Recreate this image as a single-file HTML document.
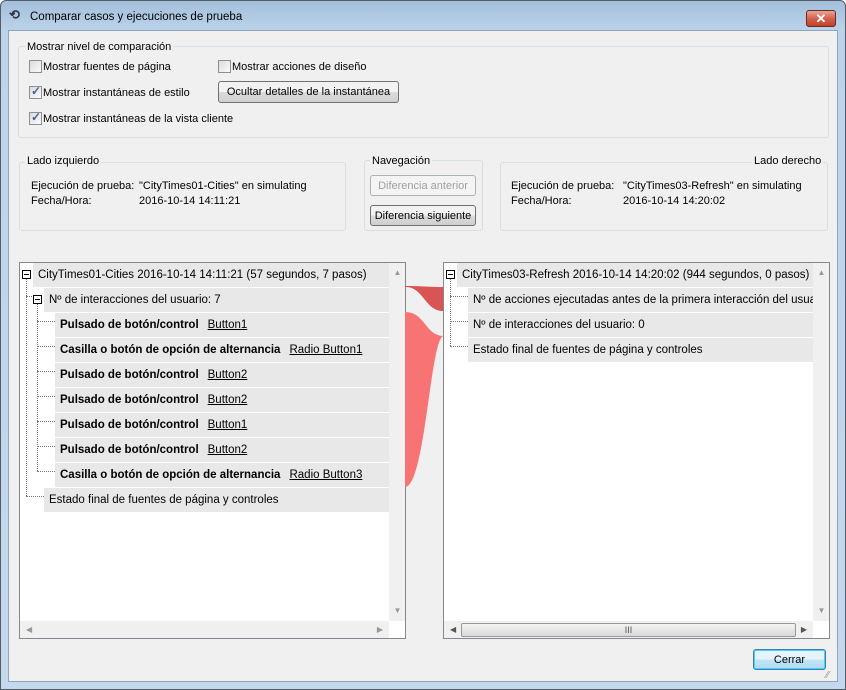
<!DOCTYPE html>
<html><head><meta charset="utf-8"><style>
*{margin:0;padding:0;box-sizing:border-box}
body{width:846px;height:690px;overflow:hidden;background:#fff;font-family:"Liberation Sans",sans-serif;font-size:11px;color:#000;position:relative}
.a{position:absolute;white-space:nowrap}
.t{margin-top:2px}
.frame{left:0;top:0;width:846px;height:690px;background:linear-gradient(#a3bfdb,#bcd3ea 30px,#c4d9ee);border:1px solid #555e68;border-radius:6px 6px 0 0}
.client{left:8px;top:30px;width:830px;height:652px;background:#f0f0f0;border:1px solid #8ea4bb}
.grp{border:1px solid #d5dfe5;border-radius:3px}
.lbl{background:#f0f0f0;padding:0 2px}
.cb{width:13px;height:13px;border:1px solid #8e8f8f;background:linear-gradient(135deg,#dcdcdc,#fbfbfb)}
.cb.k::after{content:"✓";position:absolute;left:1px;top:-3px;font-size:12px;font-weight:bold;color:#4a5f97}
.btn{border:1px solid #707070;border-radius:3px;background:linear-gradient(#f2f2f2 50%,#dcdcdc 50%,#cfcfcf);text-align:center;line-height:20px}
.tree{background:#fff;border:1px solid #828790;font-size:11.5px;overflow:hidden}
.row{position:absolute;height:24px;background:#e8e8e8;line-height:24px;padding-left:5px}
.b{font-weight:bold}
.u{text-decoration:underline;margin-left:9px}
.pm{position:absolute;width:9px;height:9px;border:1px solid #000;background:#fff}
.pm::after{content:"";position:absolute;left:1px;top:3px;width:5px;height:1px;background:#000}
.dv{position:absolute;border-left:1px dotted #777}
.dh{position:absolute;border-top:1px dotted #777}
.sb{background:#f0f0f0}
</style></head><body>
<div class="a frame"></div>
<div class="a" style="left:9px;top:8px;width:14px;height:14px;font-size:13px;line-height:14px;font-weight:bold;color:#334">⟲</div>
<div class="a" style="left:30px;top:11px;font-size:11.5px">Comparar casos y ejecuciones de prueba</div>
<div class="a" style="left:806px;top:10px;width:30px;height:17px;border:1px solid #6b2a22;border-radius:3px;background:linear-gradient(#e8a595,#d36350 50%,#c1402a);color:#fff;text-align:center;font-weight:bold;font-size:13px;line-height:15px">✕</div>
<div class="a client"></div>

<div class="a grp" style="left:18px;top:46px;width:811px;height:92px"></div>
<div class="a lbl" style="left:25px;top:41px">Mostrar nivel de comparación</div>
<div class="a cb" style="left:29px;top:60px"></div><div class="a t" style="left:43px;top:59px">Mostrar fuentes de página</div>
<div class="a cb" style="left:218px;top:60px"></div><div class="a t" style="left:232px;top:59px">Mostrar acciones de diseño</div>
<div class="a cb k" style="left:29px;top:86px"></div><div class="a t" style="left:43px;top:85px">Mostrar instantáneas de estilo</div>
<div class="a btn" style="left:218px;top:81px;width:181px;height:22px">Ocultar detalles de la instantánea</div>
<div class="a cb k" style="left:29px;top:112px"></div><div class="a t" style="left:43px;top:111px">Mostrar instantáneas de la vista cliente</div>

<div class="a grp" style="left:19px;top:162px;width:327px;height:69px"></div>
<div class="a lbl" style="left:25px;top:155px">Lado izquierdo</div>
<div class="a t" style="left:31px;top:178px">Ejecución de prueba:</div><div class="a t" style="left:139px;top:178px">"CityTimes01-Cities" en simulating</div>
<div class="a t" style="left:31px;top:193px">Fecha/Hora:</div><div class="a t" style="left:139px;top:193px">2016-10-14 14:11:21</div>

<div class="a grp" style="left:364px;top:160px;width:119px;height:71px"></div>
<div class="a lbl" style="left:370px;top:155px">Navegación</div>
<div class="a" style="left:370px;top:175px;width:106px;height:21px;border:1px solid #adb2b5;border-radius:3px;background:#f4f4f4;color:#a0a0a0;text-align:center;line-height:20px">Diferencia anterior</div>
<div class="a btn" style="left:370px;top:205px;width:106px;height:21px">Diferencia siguiente</div>

<div class="a grp" style="left:500px;top:162px;width:328px;height:69px"></div>
<div class="a lbl" style="left:752px;top:155px">Lado derecho</div>
<div class="a t" style="left:511px;top:178px">Ejecución de prueba:</div><div class="a t" style="left:623px;top:178px">"CityTimes03-Refresh" en simulating</div>
<div class="a t" style="left:511px;top:193px">Fecha/Hora:</div><div class="a t" style="left:623px;top:193px">2016-10-14 14:20:02</div>

<!-- left tree -->
<div class="a tree" style="left:19px;top:262px;width:387px;height:377px">
 <div class="row" style="left:13px;top:0;width:356px">CityTimes01-Cities 2016-10-14 14:11:21 (57 segundos, 7 pasos)</div>
 <div class="row" style="left:24px;top:25px;width:345px">Nº de interacciones del usuario: 7</div>
 <div class="row b" style="left:35px;top:50px;width:334px">Pulsado de botón/control<span class="u" style="font-weight:normal">Button1</span></div>
 <div class="row b" style="left:35px;top:75px;width:334px">Casilla o botón de opción de alternancia<span class="u" style="font-weight:normal">Radio Button1</span></div>
 <div class="row b" style="left:35px;top:100px;width:334px">Pulsado de botón/control<span class="u" style="font-weight:normal">Button2</span></div>
 <div class="row b" style="left:35px;top:125px;width:334px">Pulsado de botón/control<span class="u" style="font-weight:normal">Button2</span></div>
 <div class="row b" style="left:35px;top:150px;width:334px">Pulsado de botón/control<span class="u" style="font-weight:normal">Button1</span></div>
 <div class="row b" style="left:35px;top:175px;width:334px">Pulsado de botón/control<span class="u" style="font-weight:normal">Button2</span></div>
 <div class="row b" style="left:35px;top:200px;width:334px">Casilla o botón de opción de alternancia<span class="u" style="font-weight:normal">Radio Button3</span></div>
 <div class="row" style="left:24px;top:225px;width:345px">Estado final de fuentes de página y controles</div>
 <div class="dv" style="left:6px;top:12px;height:221px"></div>
 <div class="dv" style="left:17px;top:37px;height:171px"></div>
 <div class="dh" style="left:6px;top:33px;width:10px"></div>
 <div class="dh" style="left:6px;top:233px;width:18px"></div>
 <div class="dh" style="left:17px;top:58px;width:18px"></div><div class="dh" style="left:17px;top:83px;width:18px"></div><div class="dh" style="left:17px;top:108px;width:18px"></div><div class="dh" style="left:17px;top:133px;width:18px"></div><div class="dh" style="left:17px;top:158px;width:18px"></div><div class="dh" style="left:17px;top:183px;width:18px"></div><div class="dh" style="left:17px;top:208px;width:18px"></div>
 <div class="pm" style="left:2px;top:7px"></div>
 <div class="pm" style="left:13px;top:32px"></div>
 <div class="a sb" style="left:369px;top:0;width:17px;height:358px;color:#999;font-size:8px;text-align:center"><div style="margin-top:5px">▲</div><div style="position:absolute;top:343px;width:17px">▼</div></div>
 <div class="a sb" style="left:0;top:358px;width:369px;height:17px;color:#999;font-size:8px;line-height:17px"><span style="margin-left:6px">◀</span><span style="position:absolute;right:6px">▶</span></div>
</div>

<svg class="a" style="left:405px;top:262px" width="38" height="250">
 <path d="M0 24 C20 24 20 25 38 25 L38 49 C20 49 18 24 0 25 Z" fill="#d95454"/>
 <path d="M0 50 C20 50 20 73 38 74 C25 80 20 225 0 225 Z" fill="#f87474"/>
</svg>

<!-- right tree -->
<div class="a tree" style="left:443px;top:262px;width:387px;height:377px">
 <div class="row" style="left:13px;top:0;width:356px">CityTimes03-Refresh 2016-10-14 14:20:02 (944 segundos, 0 pasos)</div>
 <div class="row" style="left:24px;top:25px;width:345px">Nº de acciones ejecutadas antes de la primera interacción del usuario: 0</div>
 <div class="row" style="left:24px;top:50px;width:345px">Nº de interacciones del usuario: 0</div>
 <div class="row" style="left:24px;top:75px;width:345px">Estado final de fuentes de página y controles</div>
 <div class="dv" style="left:6px;top:12px;height:71px"></div>
 <div class="dh" style="left:6px;top:33px;width:18px"></div><div class="dh" style="left:6px;top:58px;width:18px"></div><div class="dh" style="left:6px;top:83px;width:18px"></div>
 <div class="pm" style="left:2px;top:7px"></div>
 <div class="a sb" style="left:369px;top:0;width:17px;height:358px;color:#999;font-size:8px;text-align:center"><div style="margin-top:5px">▲</div><div style="position:absolute;top:343px;width:17px">▼</div></div>
 <div class="a sb" style="left:0;top:358px;width:369px;height:17px;color:#555;font-size:8px;line-height:17px"><span style="margin-left:6px">◀</span><span style="position:absolute;right:6px">▶</span>
  <div class="a" style="left:17px;top:2px;width:335px;height:14px;border:1px solid #999;border-radius:2px;background:linear-gradient(#f4f4f4,#d8d8d8);text-align:center;line-height:12px;font-size:9px">III</div></div>
</div>

<div class="a" style="left:753px;top:649px;width:73px;height:21px;border:1px solid #3c7fb1;border-radius:3px;background:linear-gradient(#e5f4fc 50%,#c4e5f6 50%,#aedcf3);box-shadow:inset 0 0 0 1px #48d0f8;text-align:center;line-height:20px">Cerrar</div>
<div class="a" style="left:826px;top:670px;color:#999;font-size:10px">⁄⁄</div>
</body></html>
